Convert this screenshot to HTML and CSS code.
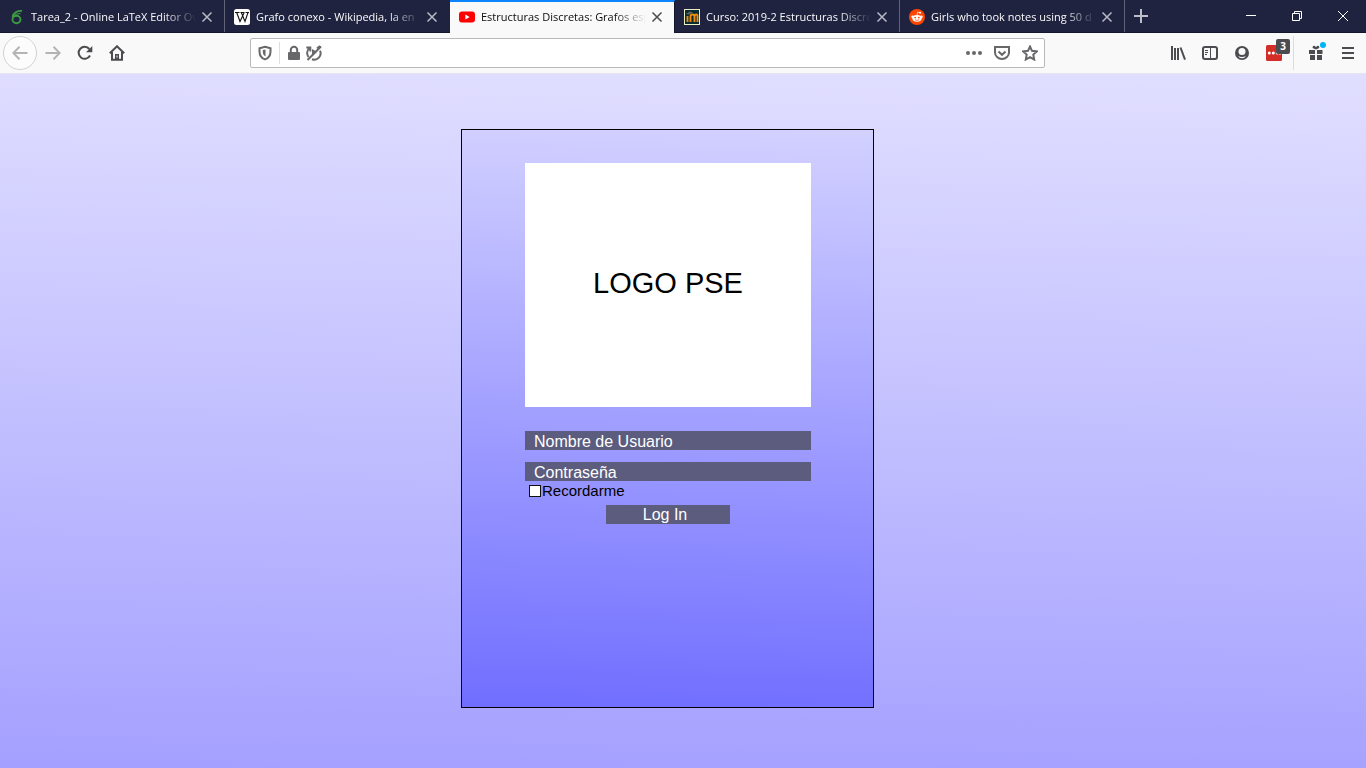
FILE: index.html
```html
<!DOCTYPE html>
<html lang="es">
<head>
<meta charset="utf-8">
<title>PSE</title>
<link rel="stylesheet" href="styles.css">
</head>
<body>
<header class="browser">
  <nav class="tabs" aria-label="Pestañas">
    <div class="tab">
      <svg class="favicon" viewBox="0 0 16 16"><path d="M13 2C9 1.500 4.500 3.500 3.500 8" fill="none" stroke="#3c9a40" stroke-width="1.800"/><path d="M11.500 4.500C9 4.500 6 5.500 4.500 8" fill="none" stroke="#3c9a40" stroke-width="1.200"/><ellipse cx="7.500" cy="10.500" rx="4" ry="3.700" fill="none" stroke="#3c9a40" stroke-width="1.900"/></svg>
      <span class="tab-title">Tarea_2 - Online LaTeX Editor Ov</span>
      <button class="close" aria-label="Cerrar pestaña"><svg viewBox="0 0 16 16"><path d="M3.500 3.500l9 9M12.500 3.500l-9 9"/></svg></button>
    </div>
    <div class="tab">
      <svg class="favicon" viewBox="0 0 16 16"><rect width="16" height="16" rx="2.500" fill="#fff"/><path d="M1 3.500h4.500M6.500 3.500h4M11.500 3.500h3.500" stroke="#111" stroke-width="1"/><path d="M2.700 3.500L6 12.500 10 4M7.300 3.500L11 12.500 14 3.500" fill="none" stroke="#111" stroke-width="1.100"/></svg>
      <span class="tab-title">Grafo conexo - Wikipedia, la en</span>
      <button class="close" aria-label="Cerrar pestaña"><svg viewBox="0 0 16 16"><path d="M3.500 3.500l9 9M12.500 3.500l-9 9"/></svg></button>
    </div>
    <div class="tab active">
      <svg class="favicon" viewBox="0 0 16 16"><rect y="2.500" width="16" height="11" rx="3" fill="#f00"/><path d="M6.400 5.600v4.800L10.600 8z" fill="#fff"/></svg>
      <span class="tab-title">Estructuras Discretas: Grafos esp</span>
      <button class="close" aria-label="Cerrar pestaña"><svg viewBox="0 0 16 16"><path d="M3.500 3.500l9 9M12.500 3.500l-9 9"/></svg></button>
    </div>
    <div class="tab">
      <svg class="favicon" viewBox="0 0 16 16"><rect x=".5" y=".5" width="15" height="15" fill="#072b31" stroke="#e9efc0"/><path d="M3.500 13V7M6.500 13V7.500q0-2 2-2t2 2V13M10.500 8q0-2.500 1.700-2.500T13.500 8v5" fill="none" stroke="#f28c0c" stroke-width="1.900"/><path d="M1.500 5L6 2.500l3 1-4 2z" fill="#5c6764"/></svg>
      <span class="tab-title">Curso: 2019-2 Estructuras Discre</span>
      <button class="close" aria-label="Cerrar pestaña"><svg viewBox="0 0 16 16"><path d="M3.500 3.500l9 9M12.500 3.500l-9 9"/></svg></button>
    </div>
    <div class="tab">
      <svg class="favicon" viewBox="0 0 16 16"><circle cx="8" cy="8" r="8" fill="#ff4500"/><ellipse cx="8" cy="9.300" rx="4.700" ry="3.400" fill="#fff"/><circle cx="3.500" cy="7.800" r="1.200" fill="#fff"/><circle cx="12.500" cy="7.800" r="1.200" fill="#fff"/><circle cx="11" cy="3.800" r="1" fill="#fff"/><path d="M8 6l.7-2.900 2.300.6" fill="none" stroke="#fff" stroke-width=".7"/><circle cx="6.200" cy="8.600" r=".9" fill="#ff4500"/><circle cx="9.800" cy="8.600" r=".9" fill="#ff4500"/><path d="M6 10.800q2 1.300 4 0" fill="none" stroke="#ff4500" stroke-width=".7"/></svg>
      <span class="tab-title">Girls who took notes using 50 d</span>
      <button class="close" aria-label="Cerrar pestaña"><svg viewBox="0 0 16 16"><path d="M3.500 3.500l9 9M12.500 3.500l-9 9"/></svg></button>
    </div>
    <button class="new-tab" aria-label="Nueva pestaña"><svg viewBox="0 0 16 16"><path d="M8 1v14M1 8h14"/></svg></button>
    <div class="window-controls">
      <button aria-label="Minimizar"><svg viewBox="0 0 16 16"><path d="M3 7.500h10"/></svg></button>
      <button aria-label="Restaurar"><svg viewBox="0 0 16 16"><path d="M3.500 5.500h7v7h-7zM5.500 5.500v-2h7v7h-2"/></svg></button>
      <button aria-label="Cerrar"><svg viewBox="0 0 16 16"><path d="M3 3l10 10M13 3L3 13"/></svg></button>
    </div>
  </nav>
  <div class="toolbar">
    <button class="back" aria-label="Atrás"><svg viewBox="0 0 16 16"><path d="M15.500 8H1.500M7.500 1.800L1.300 8l6.200 6.200"/></svg></button>
    <button class="tool faded" aria-label="Adelante"><svg viewBox="0 0 16 16"><path d="M.5 8h14M8.500 1.800L14.700 8l-6.200 6.200"/></svg></button>
    <button class="tool" aria-label="Recargar"><svg viewBox="0 0 16 16"><path d="M13 10.500A6 6 0 1 1 12.300 4"/><path class="solid" d="M15.300 1v6.300H9z"/></svg></button>
    <button class="tool" aria-label="Inicio"><svg viewBox="0 0 16 16"><path d="M.8 8.300L8 1.300l7.200 7M3 7v7.800h10V7"/><path class="solid" d="M6 9h4v6H6z"/><path class="hole" d="M7.500 10.500h1v2h-1z"/></svg></button>
    <div class="spring"></div>
    <div class="urlbar">
      <button class="protect" aria-label="Protección"><svg viewBox="0 0 16 16"><path d="M8 1.800l5.500 1.500v3.200c0 4-1.800 6.600-5.500 7.900C4.300 13.100 2.500 10.500 2.500 6.500V3.300z"/><path class="solid" d="M8.500 4.500v7C6.500 10.500 5.800 8.800 5.800 6.500V5.100z"/></svg></button>
      <button class="small" aria-label="Conexión segura"><svg viewBox="0 0 16 16"><rect class="solid" x="2" y="7" width="12" height="8" rx="1"/><path d="M4.800 7.500V5a3.200 3.200 0 0 1 6.400 0v2.500"/></svg></button>
      <button class="small" aria-label="Reproducción automática bloqueada"><svg viewBox="0 0 16 16"><path d="M3.500 3A6.500 6.500 0 0 0 2.500 12M.3 2.500h4v4M6 14.200a6.300 6.300 0 0 0 8-8.500M11 3.500l3-2.500M1.500 15L15 1.500"/><path class="solid" d="M6 4l5 2.800L6 11.500z"/></svg></button>
      <input class="address" type="text" aria-label="Dirección">
      <button class="page-action" aria-label="Acciones de página"><svg viewBox="0 0 16 16"><circle class="solid" cx="2" cy="8" r="2"/><circle class="solid" cx="8" cy="8" r="2"/><circle class="solid" cx="14" cy="8" r="2"/></svg></button>
      <button class="page-action" aria-label="Guardar en Pocket"><svg viewBox="0 0 16 16"><path d="M1 2h14v5.500a7 6.500 0 0 1-14 0z"/><path d="M4.500 6.500L8 9.800l3.500-3.300"/></svg></button>
      <button class="page-action" aria-label="Marcador"><svg viewBox="0 0 16 16"><path d="M8 1.500l2 4.300 4.800.6-3.500 3.200.9 4.900L8 12.100l-4.200 2.400.9-4.900L1.200 6.400 6 5.800z"/></svg></button>
    </div>
    <div class="spring"></div>
    <button class="tool" aria-label="Biblioteca"><svg viewBox="0 0 16 16"><path d="M2 1v14M5 3v12M8 3v12M10.500 2.500L15 14.700"/></svg></button>
    <button class="tool" aria-label="Barra lateral"><svg viewBox="0 0 16 16"><rect x="1" y="2" width="14" height="12" rx="2"/><path class="fine" d="M8.500 2v12M3 5.500h3M3 7.500h3M3 9.500h2"/></svg></button>
    <button class="tool" aria-label="Cuenta"><svg viewBox="0 0 16 16"><circle class="solid" cx="8" cy="8" r="7"/><circle class="hole" cx="8" cy="6.500" r="3.500"/><path class="hole" d="M4 10.800q4 2.600 8 0-1.200 2.500-4 2.500t-4-2.500z"/></svg></button>
    <button class="tool extension" aria-label="Extensión"><svg viewBox="0 0 16 16"><rect width="16" height="16" rx="1.500" fill="#d32d27" stroke="none"/><g fill="#fff" stroke="none"><circle cx="3.300" cy="8" r="1.500"/><circle cx="7.300" cy="8" r="1.500"/><circle cx="11.300" cy="8" r="1.500"/><path d="M13.500 6h1v4h-1z"/></g></svg><span class="count">3</span></button>
    <span class="divider"></span>
    <button class="tool gift" aria-label="Novedades"><svg viewBox="0 0 16 16"><path class="solid" d="M1 5h6v4H1zM9 5h5.500v4H9zM2 10h5v5H2zM9 10h5v5H9zM8 4.500L4.500 3 5 1l1.500-.3L8 2l1.500-1.300L11 1l.3 2z"/></svg><span class="dot"></span></button>
    <button class="tool" aria-label="Menú"><svg viewBox="0 0 16 16"><path d="M2 3h12M2 8h12M2 13h12"/></svg></button>
  </div>
</header>
<main class="page">
  <form class="login">
    <div class="logo">LOGO PSE</div>
    <input class="field" type="text" placeholder="Nombre de Usuario" aria-label="Nombre de Usuario">
    <input class="field" type="password" placeholder="Contraseña" aria-label="Contraseña">
    <div class="remember"><input type="checkbox" id="remember"><label for="remember">Recordarme</label></div>
    <button class="submit" type="submit">Log In</button>
  </form>
</main>
</body>
</html>
```
FILE: styles.css
```css
* {
  box-sizing: border-box;
}

body {
  margin: 0;
  min-height: 100vh;
  display: flex;
  flex-direction: column;
  font-family: "Liberation Sans", Arial, sans-serif;
}

button {
  border: 0;
  padding: 0;
  background: none;
  font: inherit;
  color: inherit;
}

svg {
  display: block;
  width: 16px;
  height: 16px;
  flex: none;
  fill: none;
  stroke: currentColor;
}

.solid {
  fill: currentColor;
  stroke: none;
}

.hole {
  fill: #f9f9fa;
  stroke: none;
}

/* Tab strip */

.tabs {
  display: flex;
  height: 33px;
  background: #202340;
  border-bottom: 1px solid #14162b;
  font: 11px/16px "Open Sans", "Noto Sans", sans-serif;
  color: #f9f9fa;
}

.tab {
  display: flex;
  align-items: center;
  flex: 0 1 225px;
  min-width: 0;
  padding: 2px 9px 0;
  border-right: 1px solid #62647a;
}

.tab:has(+ .active) {
  border-right-color: #202340;
}

.active {
  height: 33px;
  border-top: 2px solid #0a84ff;
  border-right-color: #14162b;
  padding-top: 0;
  padding-bottom: 2px;
  background: #f9f9fa;
  color: #0c0c0d;
}

.favicon {
  stroke: none;
}

.tab-title {
  flex: 1;
  min-width: 0;
  margin: 0 3px 0 6px;
  overflow: hidden;
  white-space: nowrap;
  mask-image: linear-gradient(to left, transparent, #000 32px);
}

.close {
  color: #b9bac6;
}

.close svg {
  stroke-width: 1.5;
}

.active .close {
  color: #4a4a4f;
}

.new-tab {
  width: 32px;
  display: grid;
  place-items: center;
  color: #bdbeca;
}

.new-tab svg {
  stroke-width: 2;
}

.window-controls {
  display: flex;
  margin-left: auto;
  color: #fff;
}

.window-controls button {
  width: 46px;
  display: grid;
  place-items: center;
}

/* Navigation toolbar */

.toolbar {
  display: flex;
  align-items: center;
  height: 41px;
  padding: 0 3px;
  background: #f9f9fa;
  border-bottom: 1px solid #e5e4ee;
  color: #4c4c50;
}

.toolbar svg {
  stroke-width: 2;
}

.back {
  display: grid;
  place-items: center;
  width: 34px;
  height: 34px;
  border: 1px solid #d2d2d4;
  border-radius: 50%;
  background: #fcfcfc;
  color: #b4b4b5;
}

.tool {
  position: relative;
  display: grid;
  place-items: center;
  width: 32px;
  height: 32px;
}

.faded {
  color: #b4b4b5;
}

.toolbar .fine {
  stroke-width: 1;
}

.spring {
  flex: 117;
}

.urlbar {
  flex: 795;
  display: flex;
  align-items: center;
  height: 30px;
  background: #fff;
  border: 1px solid #b9b9bb;
  border-radius: 2px;
  color: #68686b;
}

.protect {
  height: 22px;
  padding: 0 6px;
  margin-right: 4px;
  border-right: 1px solid #dededf;
}

.small {
  width: 20px;
  display: grid;
  place-items: center;
}

.address {
  flex: 1;
  min-width: 0;
  border: 0;
  background: none;
  outline: 0;
}

.page-action {
  width: 28px;
  display: grid;
  place-items: center;
}

.count {
  position: absolute;
  top: 2px;
  right: 0;
  width: 14px;
  height: 15px;
  border-radius: 2px;
  background: #4c4c50;
  color: #fff;
  font: bold 10px/15px "Open Sans", sans-serif;
}

.divider {
  width: 1px;
  height: 34px;
  margin: 0 6px 0 3px;
  background: #dcdcde;
}

.toolbar {
  padding-right: 2px;
}

.dot {
  position: absolute;
  top: 5px;
  right: 6px;
  width: 6px;
  height: 6px;
  border-radius: 50%;
  background: #00b3f4;
}

/* Login page */

.page {
  flex: 1;
  display: flex;
  justify-content: center;
  align-items: flex-start;
  padding: 55px 31px 60px 0;
  background: linear-gradient(181deg, #e1dfff, #a4a0ff);
}

.login {
  display: flex;
  flex-direction: column;
  width: 413px;
  padding: 33px 62px 183px 63px;
  border: 1px solid #000;
  background: linear-gradient(182deg, #d3d1ff, #706eff);
}

.logo {
  display: grid;
  place-items: center;
  height: 244px;
  margin-bottom: 24px;
  padding-bottom: 4px;
  background: #fff;
  font-size: 29px;
}

.field {
  height: 19px;
  margin: 0 0 12px;
  padding: 2px 9px 0;
  border: 0;
  border-radius: 0;
  background: #5b5c7e;
  color: #fff;
  font: 16px/17px "Liberation Sans", Arial, sans-serif;
}

.field::placeholder {
  color: #fff;
  opacity: 1;
}

.field[type="password"] {
  margin-bottom: 2px;
}

.remember {
  display: flex;
  align-items: center;
  gap: 1px;
  height: 16px;
  margin-bottom: 6px;
  padding: 0 0 0 4px;
  font-size: 15px;
  line-height: 16px;
}

.remember input {
  appearance: none;
  width: 12px;
  height: 12px;
  margin: 0;
  border: 1px solid #111;
  background: #fff;
}

.submit {
  align-self: center;
  width: 124px;
  height: 19px;
  padding-right: 6px;
  background: #5b5c7e;
  color: #fff;
  font-size: 16px;
  line-height: 19px;
}
```
